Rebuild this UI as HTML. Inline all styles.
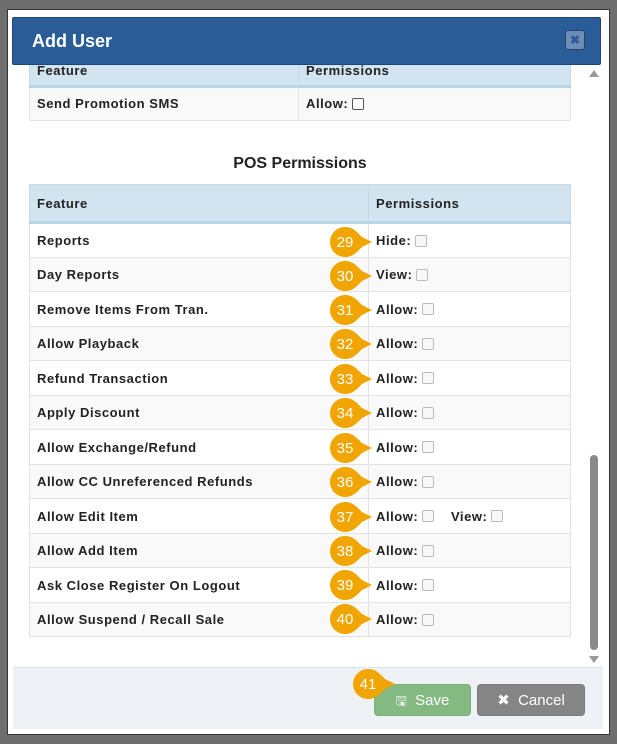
<!DOCTYPE html>
<html><head><style>
*{box-sizing:border-box;margin:0;padding:0}
body{width:617px;height:744px;background:#6e6e6e;position:relative;overflow:hidden;font-family:"Liberation Sans",Arial,sans-serif;font-size:13px;color:#222}
.modal{position:absolute;left:7px;top:9px;width:603px;height:726px;background:#fff;border:1px solid #333}
.hdr{position:absolute;left:12px;top:17px;width:589px;height:48px;background:#2a5c97;border:1px solid #1d4676;border-radius:2px;color:#fff;font-weight:bold;font-size:18px;padding:13px 0 0 19px}
.close{position:absolute;left:565px;top:30px;width:20px;height:20px;background:#6d8db6;border:1px solid #1d4676;border-radius:3px;color:#2a5c97;font-size:12px;text-align:center;line-height:18px;font-weight:bold}
table{position:absolute;border-collapse:collapse;left:29px;width:542px}
td,th{border:1px solid #e3e3e3;text-align:left;font-weight:bold;padding:0 7px;letter-spacing:.55px;vertical-align:middle}
th{background:#d2e4ef;border-color:#c5dbe8;border-bottom:3px solid #bcd5e6}
tr:nth-child(odd) td{background:#f9f9f9}
.cb{display:inline-block;width:12px;height:12px;border:1px solid #bbb;border-radius:2px;background:#f8f8f8;vertical-align:middle;margin-left:4px;position:relative;top:-1px}
.b{position:absolute;width:44px;height:30px}
.b span{position:absolute;left:0;top:1px;width:32px;height:30px;color:#fff;font-size:15px;text-align:center;line-height:30px}
.footer{position:absolute;left:13px;top:667px;width:590px;height:62px;background:#eef1f5;border-top:1px solid #dde3ea}
.btn{position:absolute;top:684px;height:32px;border-radius:4px;color:#fff;font-size:15px;line-height:32px;text-align:center}
</style></head><body>
<div class="modal"></div>
<table style="top:48px;height:73px"><tr><th style="width:269px;height:37px;padding-top:8px">Feature</th><th style="padding-top:8px">Permissions</th></tr>
<tr><td style="background:#f9f9f9;height:34px">Send Promotion SMS</td><td style="background:#f9f9f9">Allow:<span class="cb" style="border-color:#555;background:#fff;border-radius:2px"></span></td></tr></table>
<div class="hdr">Add User</div>
<div class="close">✖</div>
<div style="position:absolute;left:29px;width:542px;top:155px;text-align:center;font-weight:bold;font-size:16px">POS Permissions</div>
<table style="top:184px">
<tr><th style="width:339px;height:38px">Feature</th><th>Permissions</th></tr>
<tr><td style="height:35px">Reports</td><td>Hide:<span class="cb"></span></td></tr>
<tr><td style="height:34px">Day Reports</td><td>View:<span class="cb"></span></td></tr>
<tr><td style="height:35px">Remove Items From Tran.</td><td>Allow:<span class="cb"></span></td></tr>
<tr><td style="height:34px">Allow Playback</td><td>Allow:<span class="cb"></span></td></tr>
<tr><td style="height:35px">Refund Transaction</td><td>Allow:<span class="cb"></span></td></tr>
<tr><td style="height:34px">Apply Discount</td><td>Allow:<span class="cb"></span></td></tr>
<tr><td style="height:35px">Allow Exchange/Refund</td><td>Allow:<span class="cb"></span></td></tr>
<tr><td style="height:34px">Allow CC Unreferenced Refunds</td><td>Allow:<span class="cb"></span></td></tr>
<tr><td style="height:35px">Allow Edit Item</td><td>Allow:<span class="cb"></span>&nbsp;&nbsp;&nbsp; View:<span class="cb"></span></td></tr>
<tr><td style="height:34px">Allow Add Item</td><td>Allow:<span class="cb"></span></td></tr>
<tr><td style="height:35px">Ask Close Register On Logout</td><td>Allow:<span class="cb"></span></td></tr>
<tr><td style="height:34px">Allow Suspend / Recall Sale</td><td>Allow:<span class="cb"></span></td></tr>
</table>
<div style="position:absolute;left:589px;top:70px;width:0;height:0;border-left:5px solid transparent;border-right:5px solid transparent;border-bottom:7px solid #999"></div>
<div style="position:absolute;left:590px;top:455px;width:8px;height:195px;background:#8a8a8a;border-radius:4px"></div>
<div style="position:absolute;left:589px;top:656px;width:0;height:0;border-left:5px solid transparent;border-right:5px solid transparent;border-top:7px solid #999"></div>
<div class="footer"></div>
<div class="btn" style="left:374px;width:97px;background:#84b981;border:1px solid #7aaf77"><span style="font-size:13px">🖫</span>&nbsp;&nbsp;Save</div>
<div class="btn" style="left:477px;width:108px;background:#858585;border:1px solid #7a7a7a">✖&nbsp;&nbsp;Cancel</div>
<svg width="0" height="0" style="position:absolute"><defs><path id="tp" d="M16 0 C24 0 28 5 33 10 L43 15 L33 20 C28 25 24 30 16 30 A15 15 0 0 1 16 0Z" fill="#f0a500"/></defs></svg>
<div class="b" style="left:329px;top:227px"><svg width="44" height="30"><use href="#tp"/></svg><span>29</span></div>
<div class="b" style="left:329px;top:261px"><svg width="44" height="30"><use href="#tp"/></svg><span>30</span></div>
<div class="b" style="left:329px;top:295px"><svg width="44" height="30"><use href="#tp"/></svg><span>31</span></div>
<div class="b" style="left:329px;top:329px"><svg width="44" height="30"><use href="#tp"/></svg><span>32</span></div>
<div class="b" style="left:329px;top:364px"><svg width="44" height="30"><use href="#tp"/></svg><span>33</span></div>
<div class="b" style="left:329px;top:398px"><svg width="44" height="30"><use href="#tp"/></svg><span>34</span></div>
<div class="b" style="left:329px;top:433px"><svg width="44" height="30"><use href="#tp"/></svg><span>35</span></div>
<div class="b" style="left:329px;top:467px"><svg width="44" height="30"><use href="#tp"/></svg><span>36</span></div>
<div class="b" style="left:329px;top:502px"><svg width="44" height="30"><use href="#tp"/></svg><span>37</span></div>
<div class="b" style="left:329px;top:536px"><svg width="44" height="30"><use href="#tp"/></svg><span>38</span></div>
<div class="b" style="left:329px;top:570px"><svg width="44" height="30"><use href="#tp"/></svg><span>39</span></div>
<div class="b" style="left:329px;top:604px"><svg width="44" height="30"><use href="#tp"/></svg><span>40</span></div>
<div class="b" style="left:352px;top:669px"><svg width="44" height="30"><use href="#tp"/></svg><span>41</span></div>
</body></html>
